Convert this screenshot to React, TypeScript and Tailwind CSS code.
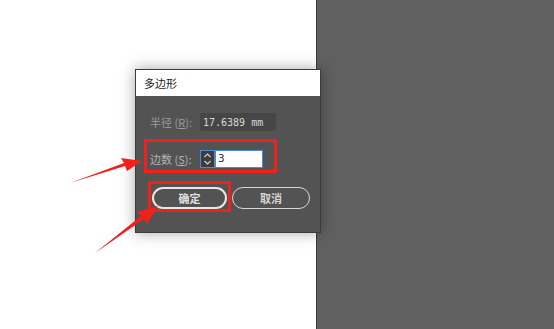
import * as React from 'react';

const CJK = "font-['Noto_Sans_CJK_SC','Noto_Sans',sans-serif]";

export default function App() {
  return (
    <div className="relative flex h-[329px] w-[554px] overflow-hidden bg-white">
      <div className="w-[316px] bg-white" />
      <div className="flex-1 border-l border-[#3a3a3a] bg-[#606060]" />

      <PolygonDialog />
      <Arrows />
    </div>
  );
}

function PolygonDialog() {
  return (
    <div
      className={`absolute left-[135px] top-[69px] flex h-[164px] w-[186px] flex-col border border-[#3c3c3c] bg-[#535353] shadow-[0_0_14px_rgba(0,0,0,0.35)] ${CJK}`}
    >
      <div className="flex h-[26px] items-center bg-white pl-[8px] text-[11px] text-[#222]">多边形</div>

      <div className="flex flex-col pl-[14px] pt-[17px]">
        <div className="flex h-[18px] items-center">
          <span className="w-[50px] text-[11px] text-[#9c9c9c]">
            半径 (<span className="underline">R</span>):
          </span>
          <div className="flex h-[18px] w-[76px] items-center rounded-[2px] bg-[#464646] pl-[3px] font-['DejaVu_Sans_Mono',monospace] text-[10px] text-[#d8d8d8]">
            17.6389 mm
          </div>
        </div>

        <div className="mt-[19px] flex h-[18px] items-center">
          <span className="w-[50px] text-[11px] text-[#b4b4b4]">
            边数 (<span className="underline">S</span>):
          </span>
          <div className="flex h-[18px] w-[15px] flex-col items-center justify-center border border-[#4a8ad8] bg-[#3d3d3d] text-[#d0d0d0]">
            <svg width="9" height="14" viewBox="0 0 9 14" fill="none" stroke="currentColor" strokeWidth="1.2">
              <path d="M1.5 5 L4.5 2 L7.5 5" />
              <path d="M1.5 9 L4.5 12 L7.5 9" />
            </svg>
          </div>
          <div className="flex h-[18px] w-[48px] items-center border border-[#4a8ad8] bg-white pl-[2px] font-['DejaVu_Sans_Mono',monospace] text-[11px] text-[#333]">
            3
          </div>
        </div>

        <div className="mt-[19px] flex gap-[5px] pl-[2px]">
          <button className="flex h-[22px] w-[75px] items-center justify-center rounded-full border-2 border-[#e8e8e8] text-[11px] font-bold text-[#e0e0e0]">
            确定
          </button>
          <button className="flex h-[22px] w-[78px] items-center justify-center rounded-full border border-[#d6d6d6] text-[11px] font-bold text-[#d6d6d6]">
            取消
          </button>
        </div>
      </div>

      {/* red highlight boxes */}
      <div className="absolute left-[8px] top-[69px] h-[34px] w-[133px] border-[3px] border-[#f0201a]" />
      <div className="absolute left-[12px] top-[111px] h-[31px] w-[83px] border-[3px] border-[#f0201a]" />
    </div>
  );
}

function Arrows() {
  return (
    <svg className="absolute left-0 top-0" width="554" height="329" viewBox="0 0 554 329">
      <path d="M70 183 L124 163 L121 158 L142 161 L127 171 L125 166 Z" fill="#f0201a" />
      <path d="M95 253 L141 216 L137 212 L158 206 L147 224 L144 219 Z" fill="#f0201a" />
    </svg>
  );
}
